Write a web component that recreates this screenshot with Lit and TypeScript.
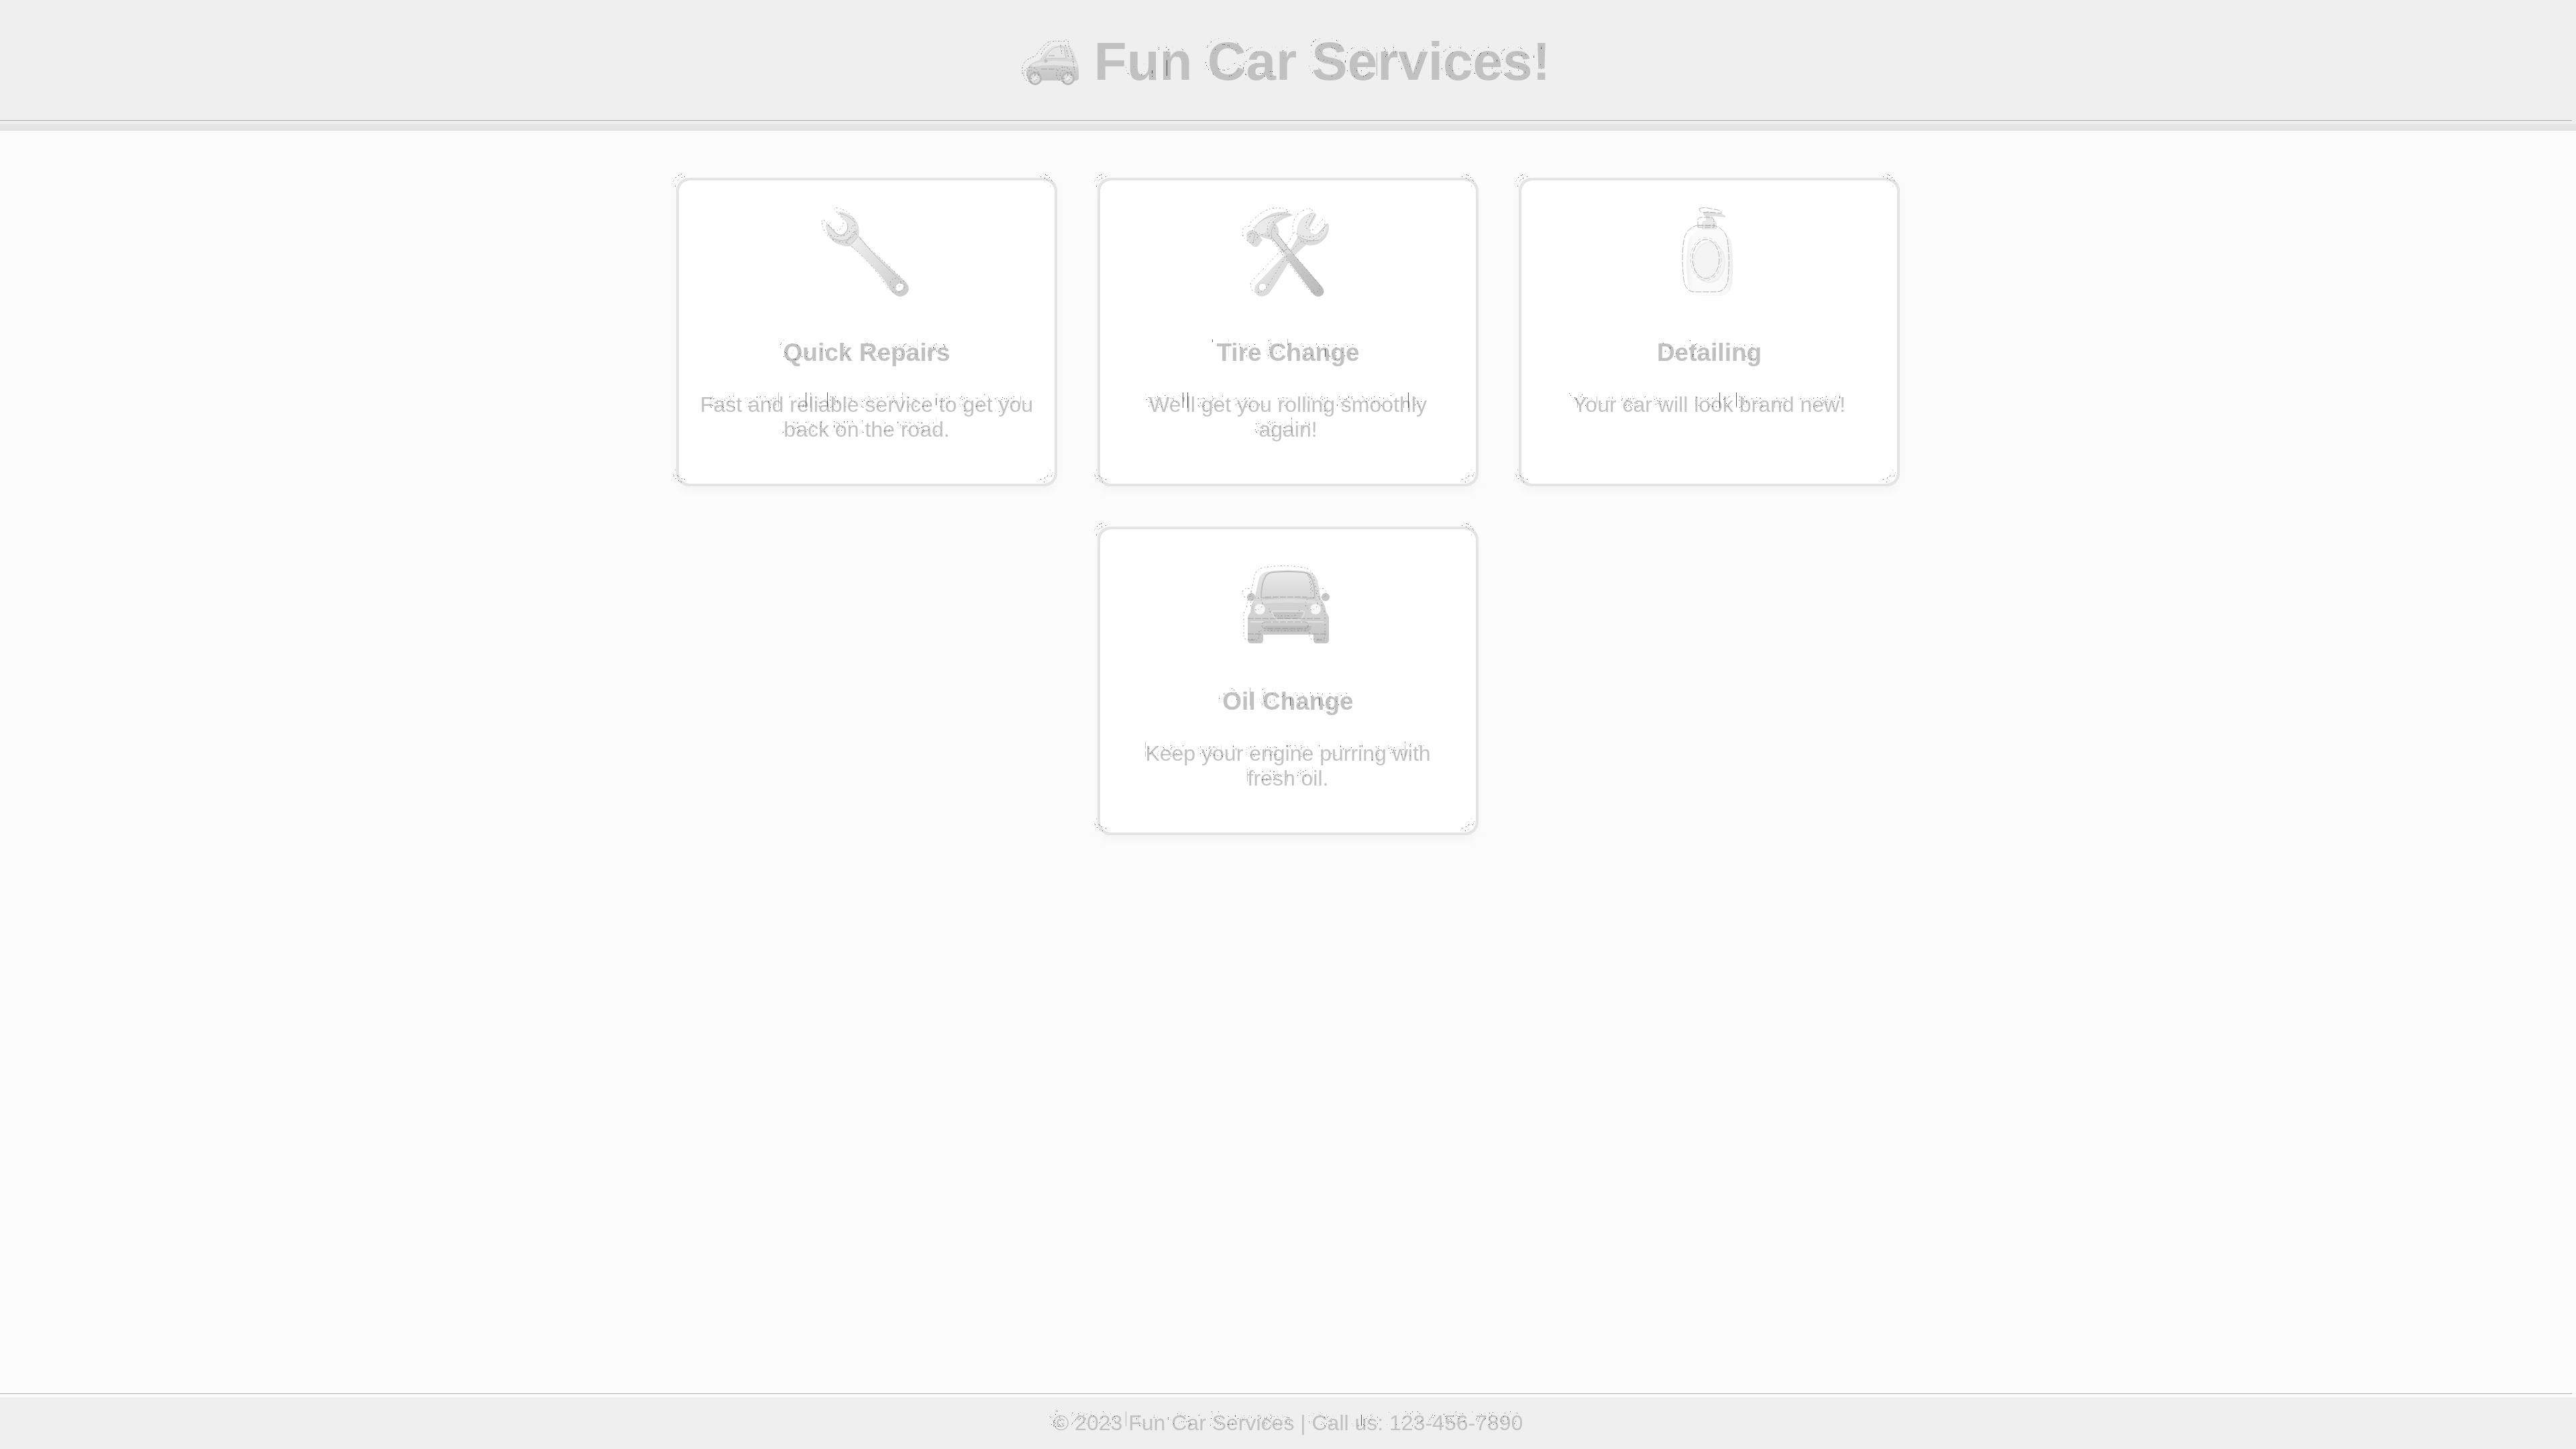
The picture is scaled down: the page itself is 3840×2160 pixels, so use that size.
import { LitElement, html, css, svg, TemplateResult } from "lit";
import { customElement } from "lit/decorators.js";

interface Service {
  icon: TemplateResult;
  title: string;
  text: string;
}

/* Shared gradients; each icon carries its own copy under its own prefix. */
const tones = (id: string) => svg`
  <defs>
    <linearGradient id="${id}-metal" x1="0" y1="0" x2="1" y2="1">
      <stop offset="0" stop-color="#efefef"></stop>
      <stop offset="0.5" stop-color="#dedede"></stop>
      <stop offset="1" stop-color="#cacaca"></stop>
    </linearGradient>
    <linearGradient id="${id}-down" x1="0" y1="0" x2="0" y2="1">
      <stop offset="0" stop-color="#e6e6e6"></stop>
      <stop offset="1" stop-color="#c4c4c4"></stop>
    </linearGradient>
    <linearGradient id="${id}-glass" x1="0" y1="0" x2="0" y2="1">
      <stop offset="0" stop-color="#ebebeb"></stop>
      <stop offset="1" stop-color="#d4d4d4"></stop>
    </linearGradient>
    <linearGradient id="${id}-grip" x1="0" y1="0" x2="1" y2="1">
      <stop offset="0" stop-color="#cfcfcf"></stop>
      <stop offset="1" stop-color="#b9b9b9"></stop>
    </linearGradient>
  </defs>`;

const wrenchHead =
  "M3 21Q4 17 7 20L19 32Q25 37 31 32Q37 26 34 17L22 3Q22 0 27 1Q43 5 50 17Q54 27 52 37L39 52Q30 53 19 48Q5 40 3 21Z";
const wrenchBar =
  "M51 36Q66 55 85 71L118 102Q129 110 126 119Q121 128 112 127Q105 125 99 117Q86 95 70 80Q54 62 39 52Z";

const wrench = html`<svg class="icon" viewBox="0 0 128 128" aria-hidden="true">
  ${tones("wr")}
  <path d=${wrenchBar} fill="url(#wr-metal)"></path>
  <path d=${wrenchHead} fill="#dedede"></path>
  <path d="M4 22Q10 42 29 44Q45 42 50 26Q49 12 38 7L24 3L35 17Q39 27 31 34Q24 38 17 33Z" fill="#e7e7e7"></path>
  <path d="M6 20L18 33Q24 38 31 34Q38 28 35 18M24 3Q38 7 46 16M12 40Q29 48 43 38L50 27M41 49L50 39" fill="none" stroke="#bfbfbf" stroke-width="1"></path>
  <path d="M53 38Q74 66 112 101" fill="none" stroke="#bcbcbc" stroke-width="1"></path>
  <ellipse cx="113" cy="113" rx="7" ry="6" transform="rotate(-35 113 113)" fill="#fff" stroke="#c0c0c0" stroke-width="1"></ellipse>
  <g class="trace" transform="translate(-6 -6)">
    <path d=${wrenchHead}></path>
    <path d=${wrenchBar}></path>
    <path d="M12 40Q29 48 43 38L50 27"></path>
    <ellipse cx="113" cy="113" rx="8" ry="7"></ellipse>
  </g>
</svg>`;

const spanner =
  "M102 2Q107 2 106 7L96 25Q96 32 102 34Q106 35 109 32L121 19Q124 16 125 22Q125 40 108 49Q100 52 91 50Q76 62 64 78Q50 102 36 122Q28 129 20 126Q12 121 15 111Q34 91 54 70L69 55L78 39Q75 22 84 11Q92 3 102 2Z";
const hammerHead =
  "M72 6Q64 0 50 1Q34 3 19 18Q11 23 14 29Q6 26 2 34L3 44L12 52Q17 55 20 51L26 43L22 37Q33 42 42 43L61 68L70 61L50 35Q52 26 46 19Q55 10 72 6Z";
const grip = "M60 68L70 61L115 113Q120 120 115 125Q108 130 102 124Z";

const tools = html`<svg class="icon" viewBox="0 0 128 128" aria-hidden="true">
  ${tones("to")}
  <path d=${spanner} fill="url(#to-metal)"></path>
  <path d="M79 25Q81 12 90 8L104 3L95 22Q93 31 102 36Q108 36 112 32L123 20Q123 35 110 42Q94 46 79 37Z" fill="#e8e8e8"></path>
  <path d="M79 37Q94 47 110 43M104 5L95 22M122 19L111 32M78 38L90 49" fill="none" stroke="#bdbdbd" stroke-width="1"></path>
  <circle cx="26" cy="113" r="6" fill="#fff" stroke="#c8c8c8" stroke-width="1"></circle>
  <path d=${hammerHead} fill="#dddddd"></path>
  <path d="M19 19Q35 3 62 4Q42 9 37 22Q33 34 20 35L13 30Z" fill="#ebebeb"></path>
  <path d="M4 36Q9 30 15 34L12 46M14 29L21 38M19 18Q35 3 68 5M45 19Q37 27 40 39L63 65M48 34L68 60" fill="none" stroke="#bebebe" stroke-width="1"></path>
  <path d=${grip} fill="url(#to-grip)"></path>
  <path d="M73 73L112 119M68 75L106 122" class="dots"></path>
  <g class="trace" transform="translate(-6 -6)">
    <path d=${spanner}></path>
    <path d=${hammerHead}></path>
    <path d=${grip}></path>
    <path d="M45 19Q37 27 40 39L63 65M19 30L12 46M79 37Q94 47 110 43"></path>
  </g>
</svg>`;

const bottleBody =
  "M52 27H76Q93 31 97 48Q101 76 98 107Q95 125 82 126H46Q34 124 32 108Q28 76 32 50Q35 31 52 27Z";
const nozzle = "M55 2Q60 -1 72 2L83 4Q89 6 88 9L69 7L59 8Q54 5 55 2Z";

const bottle = html`<svg class="icon" viewBox="0 0 128 128" aria-hidden="true">
  <defs>
    <linearGradient id="bo-body" x1="0" y1="0" x2="1" y2="0">
      <stop offset="0" stop-color="#f1f1f1"></stop>
      <stop offset="0.15" stop-color="#fbfbfb"></stop>
      <stop offset="0.85" stop-color="#f9f9f9"></stop>
      <stop offset="1" stop-color="#ededed"></stop>
    </linearGradient>
  </defs>
  <path d="M59 7H69V16H59Z" fill="#e6e6e6"></path>
  <path d=${nozzle} fill="#dfdfdf"></path>
  <path d="M53 18Q53 14 58 14H70Q75 14 75 18V28H53Z" fill="#e9e9e9"></path>
  <path d=${bottleBody} fill="url(#bo-body)"></path>
  <ellipse cx="64" cy="76" rx="23" ry="30" fill="#f4f4f4" stroke="#ededed" stroke-width="2"></ellipse>
  <g class="trace line" transform="translate(-6 -6)">
    <path d=${bottleBody}></path>
    <path d="M53 30V19Q53 15 58 15H71Q77 15 77 20V30ZM53 27H77"></path>
    <path d=${nozzle}></path>
    <ellipse cx="65" cy="77" rx="20" ry="29"></ellipse>
    <ellipse class="faint" cx="65" cy="77" rx="23" ry="32"></ellipse>
  </g>
</svg>`;

const carShell =
  "M14 58L20 30Q22 19 34 17Q64 12 94 17Q104 19 108 30L113 58Q120 66 121 78Q126 82 125 92V119Q125 124 120 124H107Q102 124 102 119V111H27V119Q27 124 22 124H9Q4 124 4 119V92Q3 82 8 78Q9 65 14 58Z";

const frontCar = html`<svg class="icon" viewBox="0 0 128 128" aria-hidden="true">
  ${tones("fc")}
  <circle cx="9" cy="55" r="6" fill="#c6c6c6"></circle>
  <circle cx="120" cy="55" r="6" fill="#c6c6c6"></circle>
  <path d=${carShell} fill="url(#fc-down)"></path>
  <path d="M24 56Q24 35 30 25Q33 19 42 18Q64 16 86 18Q95 19 98 25Q104 36 104 56Q64 60 24 56Z" fill="url(#fc-glass)" stroke="#bebebe" stroke-width="2"></path>
  <path d="M12 62Q40 55 64 57Q90 55 115 62Q121 72 121 88H8Q8 72 12 62Z" fill="#d2d2d2"></path>
  <path d="M14 61Q64 54 113 61L115 66Q64 60 13 66Z" fill="#dedede"></path>
  <circle cx="22" cy="73" r="8" fill="#f7f7f7" stroke="#e2e2e2" stroke-width="1"></circle>
  <circle cx="105" cy="73" r="8" fill="#f7f7f7" stroke="#e2e2e2" stroke-width="1"></circle>
  <path d="M42 76H87Q89 76 88 80L84 87Q83 89 80 89H49Q46 89 44 86L40 79Q40 76 42 76Z" fill="#c9c9c9" stroke="#e0e0e0" stroke-width="2"></path>
  <path d="M44 80H85M45 83H83M48 86H81" stroke="#bababa" stroke-width="1"></path>
  <path d="M8 92H121" stroke="#e0e0e0" stroke-width="2"></path>
  <path d="M29 98H99Q99 106 91 107H37Q29 105 29 98Z" fill="#bcbcbc"></path>
  <g class="trace" transform="translate(-6 -6)">
    <path d=${carShell}></path>
    <circle cx="9" cy="55" r="7"></circle>
    <circle cx="120" cy="55" r="7"></circle>
    <path d="M98 25Q104 36 104 56M102 27L107 56"></path>
    <circle cx="23" cy="71" r="9"></circle>
    <circle cx="105" cy="71" r="9"></circle>
    <path d="M42 78Q43 89 52 89H77Q86 89 88 76"></path>
  </g>
  <g class="trace line">
    <path d="M30 55H92M4 87H112M4 110H25M101 110H121M5 119H18M106 119H118"></path>
    <rect x="25" y="92" width="69" height="10" rx="5"></rect>
  </g>
</svg>`;

const sideShell =
  "M1 50Q3 41 12 37L21 33Q29 20 39 13Q50 10 62 12Q69 13 72 24L76 35Q79 42 79 50V62Q76 65 72 64H6Q1 62 1 50Z";

const sideCar = html`<svg class="badge" viewBox="0 -4 80 80" aria-hidden="true">
  ${tones("sc")}
  <path d=${sideShell} fill="url(#sc-down)"></path>
  <path d="M29 31Q34 20 43 15Q48 13 57 14L60 31Z" fill="#e6e6e6" stroke="#c4c4c4" stroke-width="1"></path>
  <path d="M60 14Q65 15 67 22L69 31H62Z" fill="#e2e2e2"></path>
  <path d="M10 39Q40 31 76 37L77 44Q40 38 8 44Z" fill="#e4e4e4"></path>
  <path d="M28 32Q32 32 33 36L29 38Q27 36 28 32Z" fill="#c0c0c0"></path>
  <circle cx="14" cy="61" r="10" fill="#b8b8b8"></circle>
  <circle cx="14" cy="61" r="7" fill="#dfdfdf"></circle>
  <circle cx="14" cy="61" r="3" fill="#ececec"></circle>
  <circle cx="63" cy="61" r="10" fill="#b8b8b8"></circle>
  <circle cx="63" cy="61" r="7" fill="#dfdfdf"></circle>
  <circle cx="63" cy="61" r="3" fill="#ececec"></circle>
  <g class="trace bold" transform="translate(-6 -6)">
    <path d="M1 60V50Q3 41 12 37L21 33Q29 20 39 13Q50 10 62 12L67 9Q71 12 69 16Q72 22 76 35L79 58"></path>
    <path d="M29 31Q34 20 43 15M58 17L60 31M65 17L70 36"></path>
    <circle cx="14" cy="61" r="11"></circle>
    <circle cx="14" cy="61" r="6"></circle>
    <circle cx="63" cy="61" r="11"></circle>
    <circle cx="63" cy="61" r="6"></circle>
  </g>
  <path class="trace line" d="M23 47H47M34 27H44"></path>
</svg>`;

const services: Service[] = [
  { icon: wrench, title: "Quick Repairs", text: "Fast and reliable service to get you back on the road." },
  { icon: tools, title: "Tire Change", text: "We’ll get you rolling smoothly again!" },
  { icon: bottle, title: "Detailing", text: "Your car will look brand new!" },
  { icon: frontCar, title: "Oil Change", text: "Keep your engine purring with fresh oil." },
];

@customElement("app-root")
export class AppRoot extends LitElement {
  static styles = css`
    :host {
      display: flex;
      flex-direction: column;
      min-height: 100vh;
      background: #fcfcfc;
      color: #c1c1c1;
      font-family: "Liberation Sans", Arial, sans-serif;
      font-size: 32px;
      line-height: 37px;
      text-align: center;
    }
    *, *::before, *::after { box-sizing: border-box; }
    .defs { display: none; }
    .header {
      position: relative;
      padding: 46px 40px 47px;
      background: #efefef;
      border-bottom: 10px solid #e4e4e4;
    }
    .header::after, .footer::before {
      content: "";
      position: absolute;
      left: 0;
      right: 6px;
      height: 1px;
      background: #aaaaaa;
    }
    .header::after { bottom: 5px; }
    .footer::before { top: -6px; }
    .title {
      display: flex;
      justify-content: center;
      align-items: center;
      gap: 22px;
      margin: 0;
      font-size: 80px;
      line-height: 92px;
    }
    .badge { width: 80px; height: 80px; overflow: visible; }
    .etched { filter: url(#etch); }
    .services {
      flex: 1;
      display: flex;
      flex-wrap: wrap;
      justify-content: center;
      align-content: flex-start;
      gap: 60px;
      width: 100%;
      max-width: 2000px;
      margin: 0 auto;
      padding: 70px 40px;
    }
    .card {
      position: relative;
      display: flex;
      flex-direction: column;
      align-items: center;
      width: 568px;
      padding: 46px 30px 62px;
      border: 4px solid #e4e4e4;
      border-radius: 20px;
      background: #ffffff;
      box-shadow: 0 8px 16px rgba(0, 0, 0, 0.03);
    }
    .card::before {
      content: "";
      position: absolute;
      inset: -4px;
      border: 4px solid #e4e4e4;
      border-radius: 20px;
      filter: url(#etch);
      pointer-events: none;
    }
    .icon { width: 128px; height: 128px; overflow: visible; }
    .name { margin: 61px 0 38px; font-size: 37px; line-height: 43px; }
    .text { margin: 0; }
    .trace { fill: none; stroke: #808080; stroke-width: 1; stroke-dasharray: 1 3 2 4; opacity: 0.9; }
    .line { stroke-dasharray: 9 2; opacity: 0.6; }
    .bold { stroke: #6c6c6c; stroke-dasharray: 2 2 1 3; }
    .faint { stroke-dasharray: 5 4; opacity: 0.5; }
    .dots { fill: none; stroke: #a4a4a4; stroke-width: 1; stroke-dasharray: 1 5; }
    .footer { position: relative; padding: 20px; background: #efefef; }
    .note { margin: 0; }
  `;

  render() {
    return html`
      <svg class="defs" aria-hidden="true">
        <!-- Speckled edge, drawn up and to the left of the shape it follows -->
        <filter id="etch" x="-5%" y="-20%" width="110%" height="140%" color-interpolation-filters="sRGB">
          <feComponentTransfer in="SourceAlpha" result="edge">
            <feFuncA type="discrete" tableValues="0 0.8 0.5 0.3 0 0 0 0 0 0 0 0 0 0 0 0"></feFuncA>
          </feComponentTransfer>
          <feFlood flood-color="#8c8c8c" flood-opacity="0.7"></feFlood>
          <feComposite in2="edge" operator="in"></feComposite>
          <feOffset dx="-6" dy="-6" result="mark"></feOffset>
          <feMerge>
            <feMergeNode in="SourceGraphic"></feMergeNode>
            <feMergeNode in="mark"></feMergeNode>
          </feMerge>
        </filter>
      </svg>
      <header class="header">
        <h1 class="title">${sideCar}<span class="etched">Fun Car Services!</span></h1>
      </header>
      <main class="services">
        ${services.map(
          (s) => html`<section class="card">
            ${s.icon}
            <h3 class="name etched">${s.title}</h3>
            <p class="text etched">${s.text}</p>
          </section>`,
        )}
      </main>
      <footer class="footer">
        <p class="note etched">© 2023 Fun Car Services | Call us: 123-456-7890</p>
      </footer>
    `;
  }
}
